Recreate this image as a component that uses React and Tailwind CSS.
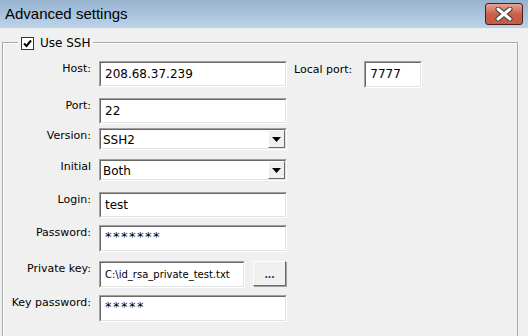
import React from 'react'

const labelFont = { fontFamily: '"DejaVu Sans", sans-serif' }

function Sunken({ className = '', children }) {
  return (
    <div className={`border border-t-[#a0a0a0] border-l-[#a0a0a0] border-b-white border-r-white ${className}`}>
      <div className="h-full w-full border border-t-[#696969] border-l-[#696969] border-b-[#e3e3e3] border-r-[#e3e3e3] bg-white">
        {children}
      </div>
    </div>
  )
}

function TextBox({ value, className = '', textClass = 'text-[12px] pt-[3px]' }) {
  return (
    <Sunken className={className}>
      <div className={`pl-[4px] leading-[16px] text-black ${textClass}`} style={labelFont}>
        {value}
      </div>
    </Sunken>
  )
}

function ComboBox({ value }) {
  return (
    <Sunken className="w-[188px] h-[22px]">
      <div className="flex h-full">
        <div className="flex-1 pl-[2px] pt-[2px] text-[12px] leading-[16px] text-black" style={labelFont}>
          {value}
        </div>
        <div className="w-[17px] h-full border border-t-white border-l-white border-b-[#696969] border-r-[#696969] bg-[#f0f0f0] flex items-center justify-center">
          <svg width="9" height="5" viewBox="0 0 9 5">
            <path d="M0 0 H9 L4.5 5 Z" fill="#000" />
          </svg>
        </div>
      </div>
    </Sunken>
  )
}

function Row({ label, top, children }) {
  return (
    <div className={`flex items-start ${top}`}>
      <div className="w-[88px] text-right text-[11px] leading-[13px] pt-[1px] text-black" style={labelFont}>
        {label}
      </div>
      <div className="ml-[8px] flex items-start">{children}</div>
    </div>
  )
}

export default function App() {
  return (
    <div className="w-[528px] h-[336px] bg-[#f0f0f0] overflow-hidden">
      {/* Title bar */}
      <div className="h-[28px] bg-gradient-to-b from-[#98b3cf] to-[#bcd3ea] flex items-start justify-between pl-[5px] pr-[5px]">
        <div
          className="pt-[5px] text-[15px] leading-[18px] text-black"
          style={{ fontFamily: '"Liberation Sans", Arial, sans-serif' }}
        >
          Advanced settings
        </div>
        <div className="mt-[3px] w-[38px] h-[22px] rounded-[3px] border border-[#4a1c1c] bg-gradient-to-b from-[#e5a596] via-[#c9604a] to-[#c85a45] flex items-center justify-center">
          <svg width="18" height="14" viewBox="0 0 18 14">
            <path d="M3 2 L15 12 M15 2 L3 12" stroke="#3c3c3c" strokeWidth="5" strokeLinecap="round" />
            <path d="M3 2 L15 12 M15 2 L3 12" stroke="#ffffff" strokeWidth="3" strokeLinecap="round" />
          </svg>
        </div>
      </div>

      {/* Group box */}
      <div className="mt-[14px] ml-[2px] w-[516px] h-[310px] border border-[#a8a8a8] shadow-[inset_1px_1px_0_#ffffff] relative">
        <div className="absolute left-[15px] -top-[7px] flex items-center bg-[#f0f0f0] pl-[3px] pr-[2px]">
          <div className="w-[13px] h-[13px] border border-[#333333] bg-white flex items-center justify-center">
            <svg width="9" height="9" viewBox="0 0 9 9">
              <path d="M1 4.5 L3.5 7 L8 1.5" stroke="#000" strokeWidth="2" fill="none" />
            </svg>
          </div>
          <span className="ml-[6px] text-[12px] leading-[14px] text-black" style={labelFont}>
            Use SSH
          </span>
        </div>

        <div className="pt-[18px]">
          <Row label="Host:" top="">
            <TextBox value="208.68.37.239" className="w-[188px] h-[26px]" />
            <div className="ml-[7px] text-[11px] leading-[13px] pt-[2px] text-black" style={labelFont}>
              Local port:
            </div>
            <TextBox value="7777" className="ml-[12px] w-[58px] h-[27px]" />
          </Row>
          <Row label="Port:" top="mt-[10px]">
            <TextBox value="22" className="w-[188px] h-[26px]" />
          </Row>
          <Row label="Version:" top="mt-[4px]">
            <ComboBox value="SSH2" />
          </Row>
          <Row label="Initial" top="mt-[9px]">
            <ComboBox value="Both" />
          </Row>
          <Row label="Login:" top="mt-[11px]">
            <TextBox value="test" className="w-[188px] h-[26px]" />
          </Row>
          <Row label="Password:" top="mt-[7px]">
            <TextBox
              value="*******"
              className="w-[188px] h-[27px]"
              textClass="text-[13px] tracking-[1.5px] pt-[2px] text-[#222222]"
            />
          </Row>
          <Row label="Private key:" top="mt-[9px]">
            <TextBox
              value="C:\id_rsa_private_test.txt"
              className="w-[146px] h-[27px]"
              textClass="text-[10px] pt-[4px] pl-[0px]"
            />
            <button className="ml-[8px] w-[33px] h-[25px] border border-t-white border-l-white border-b-[#696969] border-r-[#696969] shadow-[1px_1px_0_#a0a0a0] bg-[#f0f0f0] text-[12px] leading-[12px] text-[#1a3f7a] font-bold">
              ...
            </button>
          </Row>
          <Row label="Key password:" top="mt-[7px]">
            <TextBox
              value="*****"
              className="w-[188px] h-[27px]"
              textClass="text-[13px] tracking-[1.5px] pt-[2px] text-[#222222]"
            />
          </Row>
        </div>
      </div>
    </div>
  )
}
